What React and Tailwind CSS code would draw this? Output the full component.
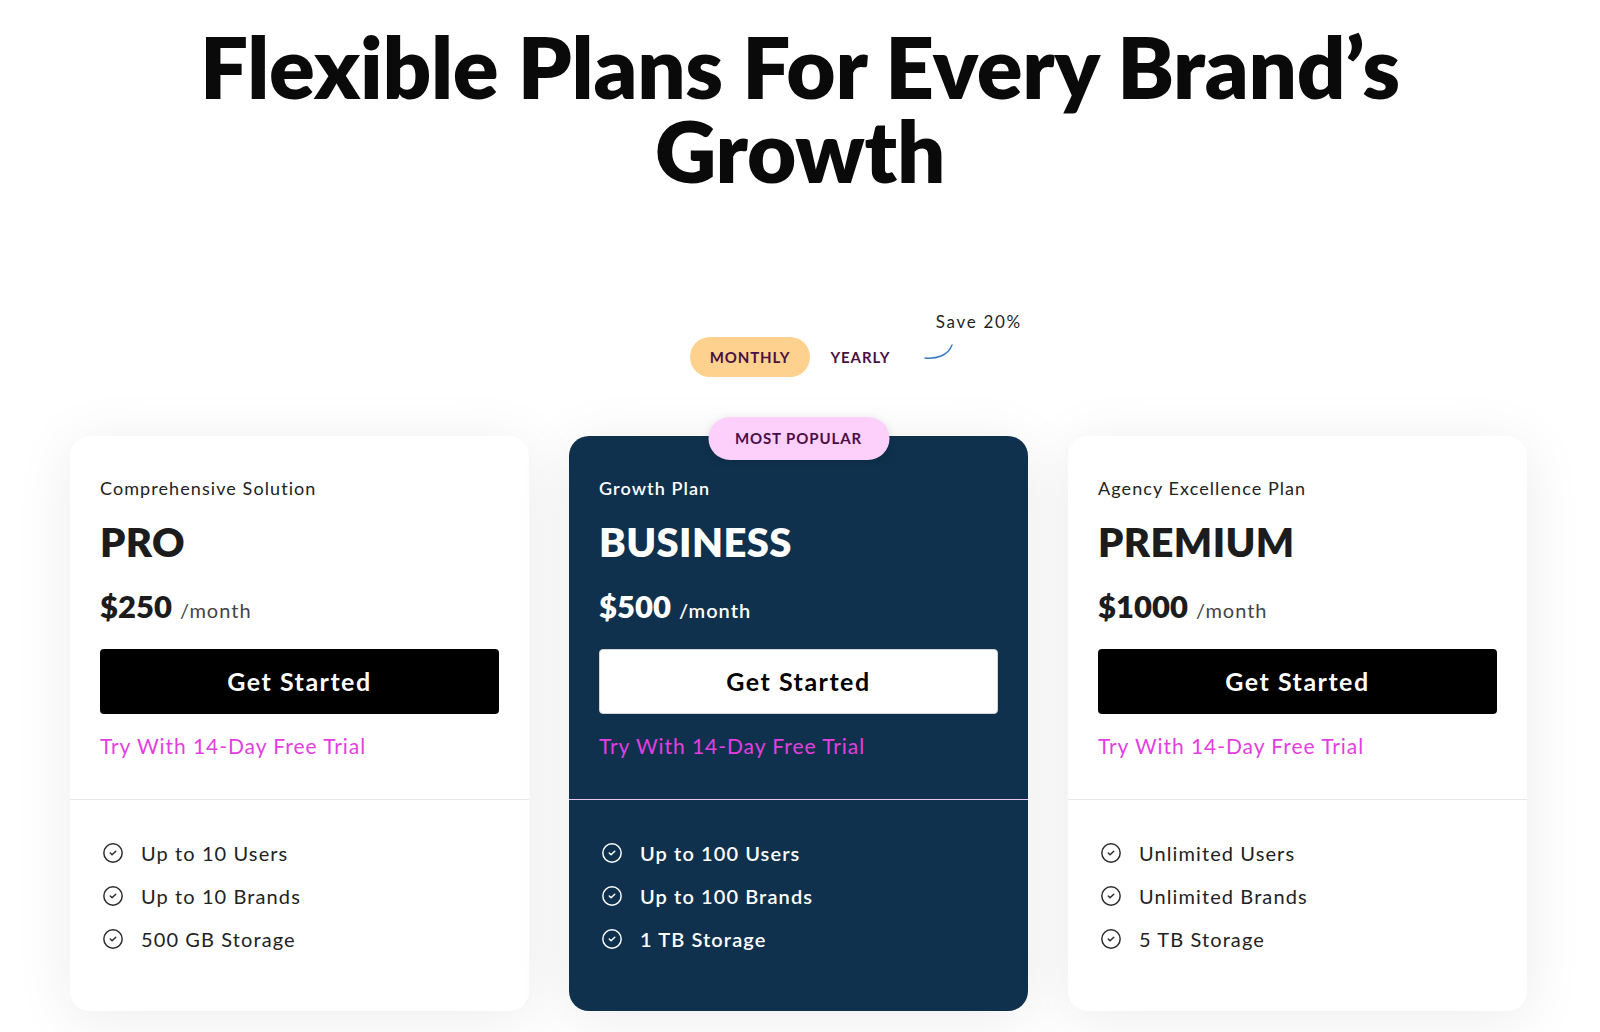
import React, { useState } from 'react';
import { CircleCheck } from 'lucide-react';

const plans = [
  {
    id: 'pro',
    tag: 'Comprehensive Solution',
    name: 'PRO',
    price: '$250',
    features: ['Up to 10 Users', 'Up to 10 Brands', '500 GB Storage'],
  },
  {
    id: 'business',
    tag: 'Growth Plan',
    name: 'BUSINESS',
    price: '$500',
    features: ['Up to 100 Users', 'Up to 100 Brands', '1 TB Storage'],
    popular: true,
  },
  {
    id: 'premium',
    tag: 'Agency Excellence Plan',
    name: 'PREMIUM',
    price: '$1000',
    features: ['Unlimited Users', 'Unlimited Brands', '5 TB Storage'],
  },
];

function PlanCard({ plan }) {
  const dark = plan.popular;
  return (
    <div
      className={`relative flex flex-col rounded-[20px] shadow-[0_8px_60px_rgba(0,0,0,0.08)] ${
        dark ? 'bg-[#0f314d] text-white' : 'bg-white text-[#1c1c1c]'
      }`}
    >
      {dark && (
        <div className="absolute left-1/2 top-[-19px] -translate-x-1/2 h-[43px] w-[181px] rounded-full bg-[#fdd0fb] shadow-[0_2px_10px_rgba(0,0,0,0.12)] flex items-center justify-center text-[15px] font-bold tracking-[0.06em] text-[#4b0d47]">
          MOST POPULAR
        </div>
      )}

      <div className={`px-[30px] pt-[40px] pb-[39px] border-b ${dark ? 'border-[#e9c6f0]' : 'border-[#e8e8e8]'}`}>
        <p className={`text-[18px] leading-[24px] tracking-[0.06em] ${dark ? 'font-semibold' : 'text-[#222]'}`}>
          {plan.tag}
        </p>
        <h3 className="mt-[18px] text-[40px] leading-[48px] font-extrabold tracking-[0.01em]">{plan.name}</h3>
        <div className="mt-[22px] text-[31px] leading-[36px] font-extrabold">
          {plan.price}
          <span className={`ml-[8px] text-[20px] leading-none tracking-[0.05em] ${dark ? 'font-semibold' : 'font-normal text-[#444]'}`}>
            /month
          </span>
        </div>
        <button
          className={`mt-[25px] w-full h-[65px] rounded-[4px] text-[25px] font-bold tracking-[0.06em] ${
            dark ? 'bg-white text-black border border-[#d4d4d4]' : 'bg-black text-white'
          }`}
        >
          Get Started
        </button>
        <p className="mt-[18px] text-[21px] leading-[28px] tracking-[0.045em] text-[#e43ee0]">
          Try With 14-Day Free Trial
        </p>
      </div>

      <ul className="px-[30px] pt-[39px] pb-[58px] flex flex-col gap-[15px]">
        {plan.features.map(f => (
          <li key={f} className="flex items-center gap-[17px] pl-[2px]">
            <CircleCheck size={22} strokeWidth={1.6} className={dark ? 'text-white' : 'text-[#2b2b2b]'} />
            <span className={`text-[20px] leading-[28px] tracking-[0.055em] ${dark ? 'font-semibold' : 'text-[#222]'}`}>
              {f}
            </span>
          </li>
        ))}
      </ul>
    </div>
  );
}

export default function App() {
  const [billing, setBilling] = useState('monthly');

  return (
    <div className="min-h-screen bg-white font-['Lato',sans-serif]">
      <h1 className="pt-[24px] text-center text-[85px] leading-[84px] font-extrabold tracking-[-0.003em] text-[#0a0a0a] px-[190px]">
        Flexible Plans For Every Brand’s Growth
      </h1>

      <div className="mt-[145px] flex justify-center">
        <div className="relative flex items-center">
          <button
            onClick={() => setBilling('monthly')}
            className={`h-[40px] px-[20px] rounded-full text-[15px] font-bold tracking-[0.06em] text-[#4a1042] ${
              billing === 'monthly' ? 'bg-[#ffd18f]' : ''
            }`}
          >
            MONTHLY
          </button>
          <button
            onClick={() => setBilling('yearly')}
            className={`h-[40px] px-[20px] rounded-full text-[15px] font-bold tracking-[0.06em] text-[#4a1042] ${
              billing === 'yearly' ? 'bg-[#ffd18f]' : ''
            }`}
          >
            YEARLY
          </button>
          <span className="absolute left-[246px] top-[-27px] whitespace-nowrap text-[17px] leading-[24px] tracking-[0.1em] text-[#1f1f1f]">
            Save 20%
          </span>
          <svg className="absolute left-[234px] top-[5px]" width="32" height="18" viewBox="0 0 32 18" fill="none">
            <path d="M1 16 C 12 17, 24 14, 28 3" stroke="#3a7bc0" strokeWidth="1.4" strokeLinecap="round" />
          </svg>
        </div>
      </div>

      <div className="mt-[59px] ml-[70px] grid grid-cols-[repeat(3,459px)] gap-[40px] pb-[21px]">
        {plans.map(p => (
          <PlanCard key={p.id} plan={p} />
        ))}
      </div>
    </div>
  );
}
